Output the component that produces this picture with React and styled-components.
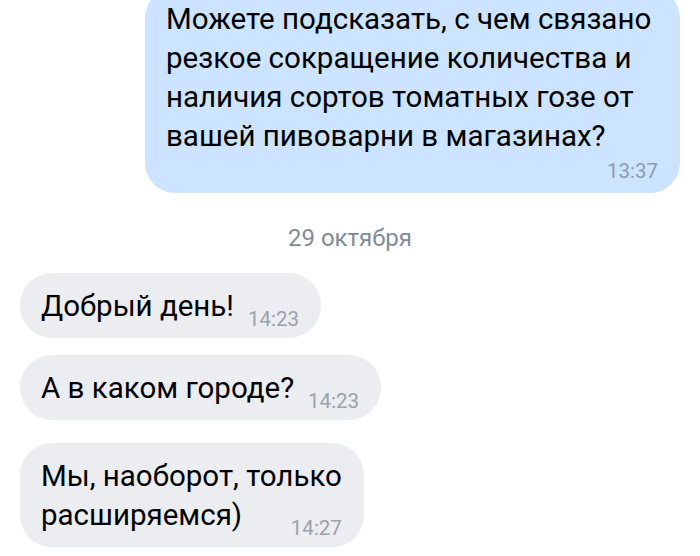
import React from "react";
import styled, { createGlobalStyle } from "styled-components";

const GlobalStyle = createGlobalStyle`
  html, body {
    margin: 0;
    padding: 0;
    background: #ffffff;
    overflow: hidden;
  }
  body {
    font-family: Roboto, "Noto Sans", "Liberation Sans", sans-serif;
    color: #000000;
  }
`;

const mensagens = [
  { texto: ["Добрый день!"], hora: "14:23" },
  { texto: ["А в каком городе?"], hora: "14:23" },
  { texto: ["Мы, наоборот, только", "расширяемся)"], hora: "14:27", novoGrupo: true },
];

const App = () => {
  return (
    <>
      <GlobalStyle />
      <Chat>
        <Enviada>
          <TextoBolha>
            Можете подсказать, с чем связано
            <br />
            резкое сокращение количества и
            <br />
            наличия сортов томатных гозе от
            <br />
            вашей пивоварни в магазинах?
          </TextoBolha>
          <HoraEnviada>13:37</HoraEnviada>
        </Enviada>

        <Data>29 октября</Data>

        <Recebidas>
          {mensagens.map((msg, index) => (
            <Recebida key={index} $novoGrupo={msg.novoGrupo}>
              {msg.texto.map((linha, i) => (
                <React.Fragment key={i}>
                  {i > 0 && <br />}
                  {/* a hora flutua na última linha */}
                  {i === msg.texto.length - 1 && <Hora>{msg.hora}</Hora>}
                  {linha}
                </React.Fragment>
              ))}
            </Recebida>
          ))}
        </Recebidas>
      </Chat>
    </>
  );
};

const Chat = styled.div`
  width: 700px;
  height: 556px;
  box-sizing: border-box;
  padding: 0 20px;
  display: flex;
  flex-direction: column;
`;

const Enviada = styled.div`
  align-self: flex-end;
  width: 535px;
  box-sizing: border-box;
  margin-top: -12px;
  padding: 12px 22px 11px 21px;
  background: #cce4ff;
  border-radius: 30px;
`;

const TextoBolha = styled.div`
  font-size: 29.5px;
  line-height: 39px;
  white-space: nowrap;
`;

const HoraEnviada = styled.div`
  text-align: right;
  font-size: 20.5px;
  line-height: 22px;
  margin-top: 4px;
  color: #8c9cb0;
`;

const Data = styled.div`
  text-align: center;
  font-size: 24px;
  line-height: 28px;
  color: #818c99;
  margin: 31px 0 21px;
`;

const Recebidas = styled.div`
  display: flex;
  flex-direction: column;
  align-items: flex-start;
  gap: 17px;
`;

const Recebida = styled.div`
  display: flow-root;
  margin-top: ${({ $novoGrupo }) => ($novoGrupo ? "6px" : "0")};
  padding: 14px 22px 12px 21px;
  background: #ebedf0;
  border-radius: 32px;
  font-size: 29.5px;
  line-height: 39px;
  white-space: nowrap;
`;

const Hora = styled.span`
  float: right;
  position: relative;
  top: 21px;
  margin-left: 14px;
  font-size: 20.5px;
  line-height: 22px;
  color: #99a2ad;
`;

export default App;
